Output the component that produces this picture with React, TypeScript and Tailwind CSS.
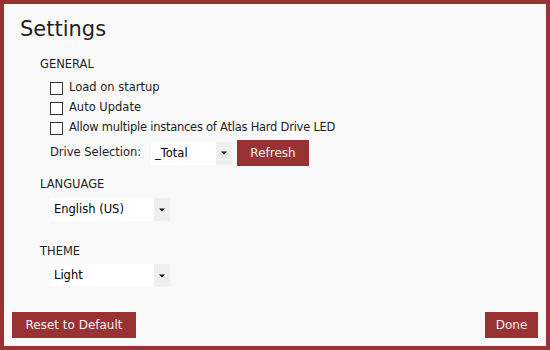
import { useState } from 'react'

const checks = [
  { id: 'startup', label: 'Load on startup' },
  { id: 'update', label: 'Auto Update' },
  { id: 'multi', label: 'Allow multiple instances of Atlas Hard Drive LED' },
]

function Select({ value, width }: { value: string; width: string }) {
  return (
    <div className={`flex h-[23px] bg-white ${width}`}>
      <span className="flex-1 pl-[4px] leading-[23px] text-black">{value}</span>
      <span className="w-[16px] bg-[#efefef] flex items-center justify-center">
        <svg width="6" height="4" viewBox="0 0 6 4">
          <path d="M0 0.5 H6 L3 3.5 Z" fill="#111" />
        </svg>
      </span>
    </div>
  )
}

function Button({ label, className }: { label: string; className?: string }) {
  return (
    <button className={`h-[26px] bg-[#993333] text-[#f2f0f7] text-[12px] ${className ?? ''}`}>
      {label}
    </button>
  )
}

export default function App() {
  const [checked, setChecked] = useState<Record<string, boolean>>({})

  return (
    <div className="w-[550px] h-[350px] border-4 border-[#993333] bg-[#f9f9f9] flex flex-col font-['DejaVu_Sans',sans-serif] text-[11.5px] text-[#1e1e1e]">
      <h1 className="pl-4 pt-[12px] text-[21px] leading-[26px]">Settings</h1>

      <div className="pl-[36px] flex flex-col">
        <div className="mt-[14px] h-4 leading-4">GENERAL</div>

        <div className="mt-[6px] pl-[10px] flex flex-col">
          {checks.map((c) => (
            <label key={c.id} className="h-5 flex items-center gap-[6px]">
              <span
                onClick={() => setChecked({ ...checked, [c.id]: !checked[c.id] })}
                className="w-[13px] h-[13px] border border-[#333] bg-white"
              />
              <span className={c.id === 'multi' ? 'tracking-[-0.25px]' : ''}>{c.label}</span>
            </label>
          ))}

          <div className="mt-[2px] h-[26px] flex items-center">
            <span className="w-[101px]">Drive Selection:</span>
            <Select value="_Total" width="w-[81px]" />
            <Button label="Refresh" className="ml-[5px] w-[72px]" />
          </div>
        </div>

        <div className="mt-[10px] h-4 leading-4">LANGUAGE</div>
        <div className="mt-[6px] pl-[10px]">
          <Select value="English (US)" width="w-[120px]" />
        </div>

        <div className="mt-[22px] h-4 leading-4">THEME</div>
        <div className="mt-[5px] pl-[10px]">
          <Select value="Light" width="w-[120px]" />
        </div>
      </div>

      <div className="mt-auto px-2 pb-2 flex justify-between">
        <Button label="Reset to Default" className="w-[124px]" />
        <Button label="Done" className="w-[53px]" />
      </div>
    </div>
  )
}
